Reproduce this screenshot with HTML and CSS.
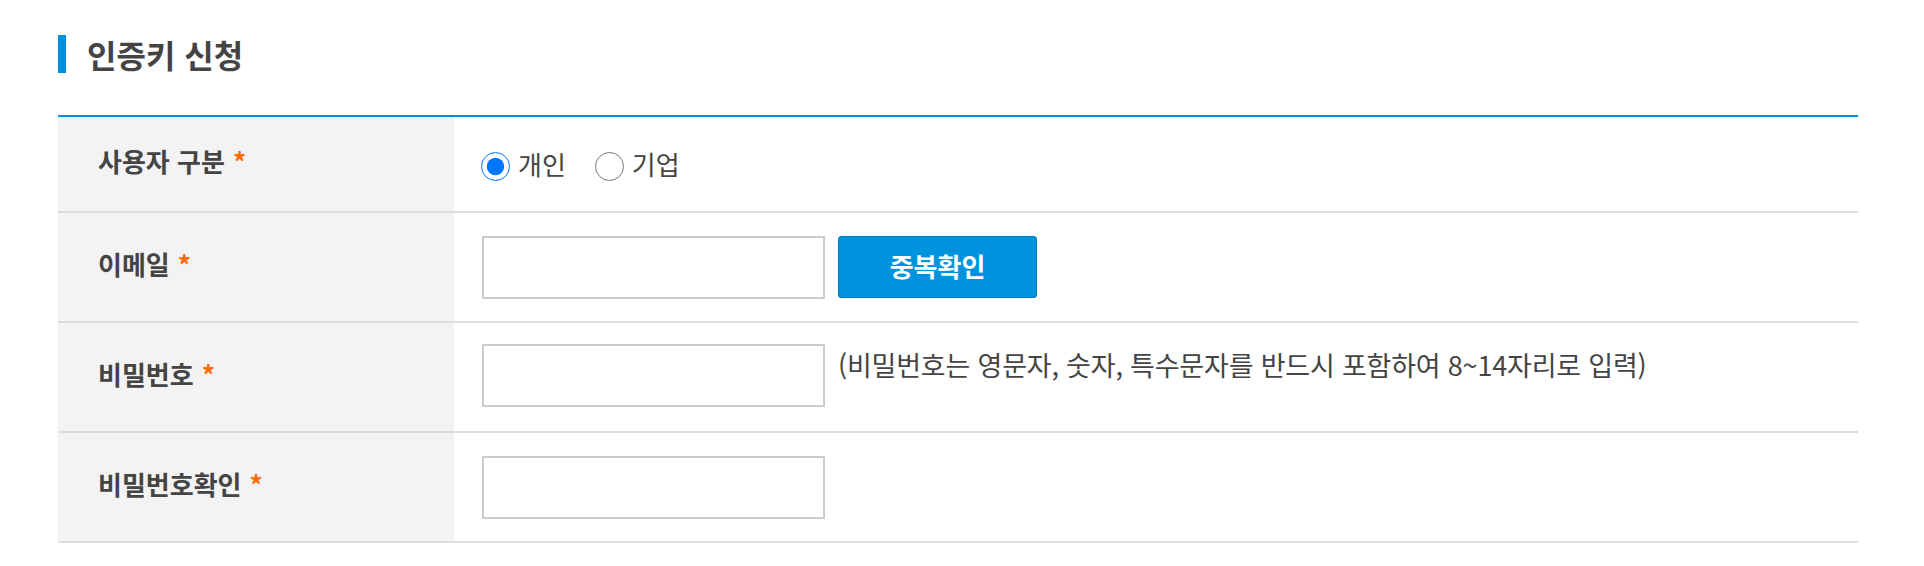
FILE: index.html
```html
<!DOCTYPE html>
<html lang="ko">
<head>
<meta charset="utf-8">
<title>인증키 신청</title>
<link rel="stylesheet" href="styles.css">
</head>
<body>
<div class="page">
  <h2 class="title"><span class="title-bar"></span>인증키 신청</h2>
  <div class="form">
    <div class="row row-short">
      <div class="label">사용자 구분 <span class="req">*</span></div>
      <div class="value">
        <label class="radio"><input type="radio" name="type" checked><span>개인</span></label>
        <label class="radio"><input type="radio" name="type"><span>기업</span></label>
      </div>
    </div>
    <div class="row">
      <div class="label">이메일 <span class="req">*</span></div>
      <div class="value">
        <input class="field" type="text">
        <button class="btn" type="button">중복확인</button>
      </div>
    </div>
    <div class="row">
      <div class="label">비밀번호 <span class="req">*</span></div>
      <div class="value value-top">
        <input class="field" type="password">
        <span class="help">(비밀번호는 영문자, 숫자, 특수문자를 반드시 포함하여 8~14자리로 입력)</span>
      </div>
    </div>
    <div class="row">
      <div class="label">비밀번호확인 <span class="req">*</span></div>
      <div class="value">
        <input class="field" type="password">
      </div>
    </div>
  </div>
</div>
</body>
</html>
```

FILE: styles.css
```css
* { box-sizing: border-box; }
html, body { margin: 0; padding: 0; background: #fff; }
body {
  font-family: "Noto Sans CJK KR", "Noto Sans", sans-serif;
  color: #444;
}
.page {
  width: 1800px;
  margin-left: 58px;
  padding-top: 35px;
}
.title {
  display: flex;
  align-items: center;
  height: 38px;
  margin: 0 0 42px 0;
  font-size: 32px;
  font-weight: 700;
  color: #444;
}
.title-bar {
  width: 8px;
  height: 38px;
  background: #0090dd;
  margin-right: 21px;
}
.form {
  border-top: 2px solid #0091de;
}
.row {
  display: flex;
  min-height: 110px;
  border-bottom: 2px solid #dddddd;
}
.row-short { min-height: 96px; }
.label {
  width: 396px;
  flex: none;
  background: #f3f3f3;
  display: flex;
  align-items: center;
  padding-left: 40px;
  padding-bottom: 7px;
  font-size: 26px;
  font-weight: 700;
  color: #444;
}
.req {
  color: #ff6a00;
  margin-left: 8px;
}
.value {
  flex: 1;
  display: flex;
  align-items: center;
  padding-left: 28px;
}
.value-top { align-items: flex-start; padding-top: 21px; }
.radio {
  display: flex;
  align-items: center;
  margin-right: 30px;
  font-size: 26px;
  color: #444;
}
.radio input {
  width: 29px;
  height: 29px;
  margin: 4px 8px 0 -1px;
}
.radio span { padding-bottom: 2px; }
.field {
  width: 343px;
  height: 63px;
  border: 2px solid #cccccc;
  background: #fff;
  margin: 0;
  padding: 0 10px;
  font-size: 22px;
  outline: none;
}
.btn {
  margin-left: 13px;
  width: 199px;
  height: 62px;
  background: #0093dd;
  border: 1px solid #0078bb;
  border-radius: 3px;
  color: #fff;
  font-family: "Noto Sans CJK KR", "Noto Sans", sans-serif;
  font-size: 26px;
  font-weight: 700;
  padding: 0 0 4px 0;
}
.help {
  margin-left: 13px;
  margin-top: 5px;
  font-size: 27px;
  line-height: 32px;
  color: #444;
  letter-spacing: -0.2px;
}
```
